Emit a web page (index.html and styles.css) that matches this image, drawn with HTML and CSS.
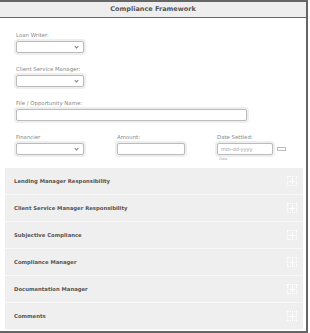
FILE: index.html
```html
<!DOCTYPE html>
<html lang="en">
<head>
  <meta charset="UTF-8" />
  <title>Compliance Framework</title>
  <link rel="stylesheet" href="styles.css">
</head>
<body>
  <div class="frame">
    <header class="frame-head">Compliance Framework</header>

    <!-- main form -->
    <form class="form">
      <div class="field">
        <label>Loan Writer:</label>
        <span class="sel-wrap"><select class="ctl sel"><option></option></select></span>
      </div>
      <div class="field">
        <label>Client Service Manager:</label>
        <span class="sel-wrap"><select class="ctl sel"><option></option></select></span>
      </div>
      <div class="field">
        <label>File / Opportunity Name:</label>
        <input class="ctl wide" type="text" />
      </div>
      <div class="row">
        <div class="field">
          <label>Financier</label>
          <span class="sel-wrap"><select class="ctl sel"><option></option></select></span>
        </div>
        <div class="field">
          <label>Amount:</label>
          <input class="ctl amount" type="text" />
        </div>
        <div class="field">
          <label>Date Settled:</label>
          <div class="date-line">
            <input class="ctl date" type="text" placeholder="mm-dd-yyyy" />
            <span class="cal"></span>
          </div>
          <small class="hint">Date</small>
        </div>
      </div>
    </form>

    <!-- sections -->
    <div class="panels">
      <div class="panel"><span>Lending Manager Responsibility</span><i class="plus"></i></div>
      <div class="panel"><span>Client Service Manager Responsibility</span><i class="plus"></i></div>
      <div class="panel"><span>Subjective Compliance</span><i class="plus"></i></div>
      <div class="panel"><span>Compliance Manager</span><i class="plus"></i></div>
      <div class="panel"><span>Documentation Manager</span><i class="plus"></i></div>
      <div class="panel"><span>Comments</span><i class="plus"></i></div>
    </div>
  </div>
</body>
</html>
```

FILE: styles.css
```css
body { margin: 0; font-family: "DejaVu Sans", Verdana, sans-serif; background: #fff; }
.frame { width: 308px; height: 333px; box-sizing: border-box; border: 2px solid #666; border-left: 0; overflow: hidden; }
.frame-head { height: 15px; line-height: 15px; background: #eee; border-bottom: 1px solid #666; text-align: center; font-size: 6.5px; font-weight: bold; color: #555; }

.form { padding: 13px 0 0 16px; }
.field label { display: block; font-size: 5.4px; line-height: 8px; color: #888; margin-bottom: 2px; }
.field { margin-bottom: 12px; }
.ctl { display: block; box-sizing: border-box; height: 12px; margin: 0; padding: 0 3px; border: 1px solid #bbb; border-radius: 2px; background: #fff; font-family: inherit; font-size: 5px; color: #888; box-shadow: 0 0 0 2px #eee; outline: none; }
.sel { width: 68px; -webkit-appearance: none; appearance: none; }
.sel-wrap { position: relative; display: block; width: 68px; }
.sel-wrap::after { content: ""; position: absolute; right: 6px; top: 4px; width: 2px; height: 2px; border-right: 1px solid #777; border-bottom: 1px solid #777; transform: rotate(45deg); }
.wide { width: 231px; }
.amount { width: 68px; margin-top: 2px; }
.date { width: 56px; }
.date::placeholder { color: #999; }

.row { display: grid; grid-template-columns: 101px 100px 90px; }
.row .field { margin-bottom: 0; }
.date-line { display: flex; align-items: center; gap: 4px; }
.cal { width: 7px; height: 2px; border: 1px solid #bbb; }
.hint { display: block; font-size: 3.5px; color: #aaa; margin-top: 2px; padding-left: 2px; }

.panels { margin: 7px 3px 0 5px; }
.panel { display: flex; align-items: center; justify-content: space-between; height: 26px; padding: 0 6px 0 9px; background: #efefef; border-bottom: 1px solid #f8f8f8; font-size: 5.3px; font-weight: bold; color: #555; }
.plus { position: relative; width: 8px; height: 8px; border: 1px dotted #fff; }
.plus::before { content: ""; position: absolute; left: 1px; right: 1px; top: 3.5px; height: 1px; background: #fff; }
.plus::after { content: ""; position: absolute; top: 1px; bottom: 1px; left: 3.5px; width: 1px; background: #fff; }
```
